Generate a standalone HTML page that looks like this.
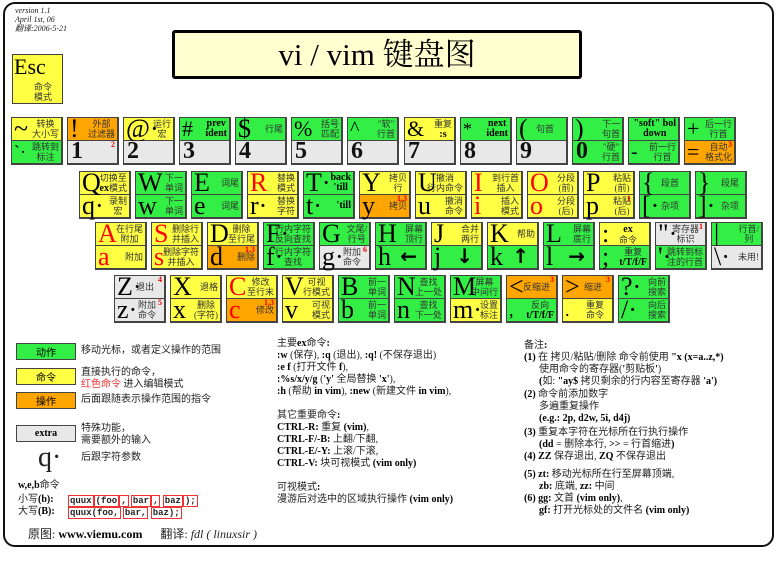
<!DOCTYPE html>
<html><head><meta charset="utf-8"><style>
body{margin:0;width:777px;height:573px;background:#fff;position:relative;overflow:hidden;font-family:"Liberation Serif","Noto Serif CJK SC",serif;}
.frame{position:absolute;left:3px;top:2px;width:767px;height:541px;border:2px solid #111;border-radius:12px;box-sizing:content-box;}
.ttl{position:absolute;left:172px;top:30px;width:404px;height:43px;background:#ffffd0;border:3px solid #000;border-radius:3px;font-size:31px;line-height:43px;text-align:center;}
.k{position:absolute;width:52px;height:48px;border:1.5px solid #444;box-sizing:border-box;background:#444;}
.h{position:absolute;left:0;width:49px;height:22px;overflow:visible;}
.h.a{top:0}.h.b{top:23px}
.g{background:#33ee44}.y{background:#ffff44}.o{background:#ffa500}.e{background:#e8e8e8}
.c{position:absolute;left:2px;top:-4px;font-size:26px;line-height:30px;font-weight:normal;font-style:normal;}
.t{position:absolute;right:2px;top:1px;font-size:9px;line-height:10px;text-align:center;font-style:normal;font-family:"Liberation Serif","Noto Sans CJK SC",sans-serif;color:#333;white-space:nowrap;}
.t1{top:6px}
.bd{font-weight:bold;color:#000;font-family:"Liberation Serif",serif;font-size:10px;}
.r{color:#f00}
.s{position:absolute;right:2px;top:-1px;color:#e00;font-size:8px;font-weight:bold;}
.n{position:absolute;left:3px;top:-3px;font-size:24px;color:#111}
.ar{position:absolute;right:8px;top:-2px;font-size:20px;line-height:24px;font-weight:bold;color:#000;font-family:"DejaVu Sans",sans-serif;}
.tx{position:absolute;font-size:10px;line-height:12px;color:#222;white-space:nowrap;font-family:"Liberation Serif","Noto Sans CJK SC",serif;}
.tx b{color:#000}
.lg{position:absolute;left:16px;width:58px;height:15px;border:1.5px solid #444;font-size:10px;text-align:center;line-height:15px;font-family:"Noto Sans CJK SC",sans-serif;}
.rb{border:1px solid #e33;padding:0 1px;font-family:"Liberation Mono",monospace;font-weight:bold;}
</style></head><body>
<div class="frame"></div>
<div class="tx" style="left:15px;top:6px;font-size:8px;line-height:9px;font-style:italic">version 1.1<br>April 1st, 06<br>翻译:2006-5-21</div>
<div class="ttl">vi / vim 键盘图</div>
<div style="position:absolute;left:12px;top:54px;width:49px;height:48px;background:#ffff44;border:1.5px solid #444">
<span style="position:absolute;left:1px;top:-1px;font-size:22px">Esc</span>
<span class="t" style="top:27px;right:10px">命令<br>模式</span></div>

<!-- Row 1 -->
<div class="k" style="left:11px;top:117px"><div class="h a y"><b class="c">~</b><i class="t">转换<br>大小写</i></div><div class="h b g"><b class="c" style="font-size:18px">`·</b><i class="t">跳转到<br>标注</i></div></div>
<div class="k" style="left:67px;top:117px"><div class="h a o"><b class="c">!</b><i class="t">外部<br>过滤器</i></div><div class="h b e"><b class="n">1</b><span class="s">2</span></div></div>
<div class="k" style="left:123px;top:117px"><div class="h a y"><b class="c">@·</b><i class="t">运行<br>宏</i></div><div class="h b e"><b class="n">2</b></div></div>
<div class="k" style="left:179px;top:117px"><div class="h a g"><b class="c" style="font-size:22px">#</b><i class="t bd">prev<br>ident</i></div><div class="h b e"><b class="n">3</b></div></div>
<div class="k" style="left:235px;top:117px"><div class="h a g"><b class="c">$</b><i class="t t1">行尾</i></div><div class="h b e"><b class="n">4</b></div></div>
<div class="k" style="left:291px;top:117px"><div class="h a g"><b class="c" style="font-size:22px">%</b><i class="t">括号<br>匹配</i></div><div class="h b e"><b class="n">5</b></div></div>
<div class="k" style="left:347px;top:117px"><div class="h a g"><b class="c" style="font-size:20px">^</b><i class="t">"软"<br>行首</i></div><div class="h b e"><b class="n">6</b></div></div>
<div class="k" style="left:404px;top:117px"><div class="h a y"><b class="c" style="font-size:22px">&amp;</b><i class="t">重复<br><b class="bd">:s</b></i></div><div class="h b e"><b class="n">7</b></div></div>
<div class="k" style="left:460px;top:117px"><div class="h a g"><b class="c" style="font-size:18px">*</b><i class="t bd">next<br>ident</i></div><div class="h b e"><b class="n">8</b></div></div>
<div class="k" style="left:516px;top:117px"><div class="h a g"><b class="c">(</b><i class="t t1" style="right:12px">句首</i></div><div class="h b e"><b class="n">9</b></div></div>
<div class="k" style="left:572px;top:117px"><div class="h a g"><b class="c">)</b><i class="t">下一<br>句首</i></div><div class="h b g"><b class="n">0</b><i class="t">"硬"<br>行首</i></div></div>
<div class="k" style="left:628px;top:117px"><div class="h a g"><b class="c" style="top:2px">_</b><i class="t bd">"soft" bol<br>down</i></div><div class="h b g"><b class="c" style="font-size:20px">-</b><i class="t">前一行<br>行首</i></div></div>
<div class="k" style="left:684px;top:117px"><div class="h a g"><b class="c" style="font-size:22px">+</b><i class="t">后一行<br>行首</i></div><div class="h b o"><b class="c" style="font-size:22px">=</b><i class="t">自动<br>格式化</i><span class="s">3</span></div></div>

<!-- Row 2 -->
<div class="k" style="left:79px;top:171px"><div class="h a y"><b class="c">Q</b><i class="t">切换至<br><b class="bd">ex</b>模式</i></div><div class="h b y"><b class="c">q·</b><i class="t">录制<br>宏</i></div></div>
<div class="k" style="left:135px;top:171px"><div class="h a g"><b class="c">W</b><i class="t">下一<br>单词</i></div><div class="h b g"><b class="c">w</b><i class="t">下一<br>单词</i></div></div>
<div class="k" style="left:191px;top:171px"><div class="h a g"><b class="c">E</b><i class="t t1">词尾</i></div><div class="h b g"><b class="c">e</b><i class="t t1">词尾</i></div></div>
<div class="k" style="left:247px;top:171px"><div class="h a y"><b class="c r">R</b><i class="t">替换<br>模式</i></div><div class="h b y"><b class="c">r·</b><i class="t">替换<br>字符</i></div></div>
<div class="k" style="left:303px;top:171px"><div class="h a g"><b class="c">T·</b><i class="t bd">back<br>'till</i></div><div class="h b g"><b class="c">t·</b><i class="t t1 bd">'till</i></div></div>
<div class="k" style="left:359px;top:171px"><div class="h a y"><b class="c">Y</b><i class="t">拷贝<br>行</i></div><div class="h b o"><b class="c">y</b><i class="t t1">拷贝</i><span class="s">1,3</span></div></div>
<div class="k" style="left:415px;top:171px"><div class="h a y"><b class="c">U</b><i class="t">撤消<br>行内命令</i></div><div class="h b y"><b class="c">u</b><i class="t">撤消<br>命令</i></div></div>
<div class="k" style="left:471px;top:171px"><div class="h a y"><b class="c r">I</b><i class="t">到行首<br>插入</i></div><div class="h b y"><b class="c r">i</b><i class="t">插入<br>模式</i></div></div>
<div class="k" style="left:527px;top:171px"><div class="h a y"><b class="c r">O</b><i class="t">分段<br>(前)</i></div><div class="h b y"><b class="c r">o</b><i class="t">分段<br>(后)</i></div></div>
<div class="k" style="left:583px;top:171px"><div class="h a y"><b class="c">P</b><i class="t">粘贴<br>(前)</i></div><div class="h b y"><b class="c">p</b><i class="t">粘贴<br>(后)</i><span class="s">1</span></div></div>
<div class="k" style="left:639px;top:171px"><div class="h a g"><b class="c">{</b><i class="t t1" style="right:10px">段首</i></div><div class="h b g"><b class="c">[·</b><i class="t t1" style="right:10px">杂项</i></div></div>
<div class="k" style="left:695px;top:171px"><div class="h a g"><b class="c">}</b><i class="t t1" style="right:6px">段尾</i></div><div class="h b g"><b class="c">]·</b><i class="t t1" style="right:6px">杂项</i></div></div>

<!-- Row 3 -->
<div class="k" style="left:95px;top:222px"><div class="h a y"><b class="c r">A</b><i class="t">在行尾<br>附加</i></div><div class="h b y"><b class="c r">a</b><i class="t t1">附加</i></div></div>
<div class="k" style="left:151px;top:222px"><div class="h a y"><b class="c r">S</b><i class="t">删除行<br>并插入</i></div><div class="h b y"><b class="c r">s</b><i class="t">删除字符<br>并插入</i></div></div>
<div class="k" style="left:207px;top:222px"><div class="h a y"><b class="c">D</b><i class="t">删除<br>至行尾</i></div><div class="h b o"><b class="c">d</b><i class="t t1">删除</i><span class="s">1,3</span></div></div>
<div class="k" style="left:263px;top:222px"><div class="h a g"><b class="c">F·</b><i class="t">行内字符<br>反向查找</i></div><div class="h b g"><b class="c">f·</b><i class="t">行内字符<br>查找</i></div></div>
<div class="k" style="left:319px;top:222px"><div class="h a g"><b class="c">G</b><i class="t">文尾/<br>行号</i></div><div class="h b e"><b class="c">g·</b><i class="t" style="right:8px">附加<br>命令</i><span class="s">6</span></div></div>
<div class="k" style="left:375px;top:222px"><div class="h a g"><b class="c">H</b><i class="t">屏幕<br>顶行</i></div><div class="h b g"><b class="c">h</b><span class="ar">←</span></div></div>
<div class="k" style="left:431px;top:222px"><div class="h a y"><b class="c">J</b><i class="t">合并<br>两行</i></div><div class="h b g"><b class="c">j</b><span class="ar">↓</span></div></div>
<div class="k" style="left:487px;top:222px"><div class="h a y"><b class="c">K</b><i class="t t1">帮助</i></div><div class="h b g"><b class="c">k</b><span class="ar">↑</span></div></div>
<div class="k" style="left:543px;top:222px"><div class="h a g"><b class="c">L</b><i class="t">屏幕<br>底行</i></div><div class="h b g"><b class="c">l</b><span class="ar">→</span></div></div>
<div class="k" style="left:599px;top:222px"><div class="h a y"><b class="c">:</b><i class="t" style="right:12px"><b class="bd">ex</b><br>命令</i></div><div class="h b g"><b class="c">;</b><i class="t">重复<br><b class="bd">t/T/f/F</b></i></div></div>
<div class="k" style="left:655px;top:222px"><div class="h a e"><b class="c">"·</b><i class="t" style="right:6px">寄存器<br>标识</i><span class="s">1</span></div><div class="h b g"><b class="c">'·</b><i class="t">跳转到标<br>注的行首</i></div></div>
<div class="k" style="left:711px;top:222px"><div class="h a g"><b class="c">|</b><i class="t">行首/<br>列</i></div><div class="h b e"><b class="c">\·</b><i class="t t1">未用!</i></div></div>

<!-- Row 4 -->
<div class="k" style="left:114px;top:275px"><div class="h a e"><b class="c">Z·</b><i class="t t1" style="right:10px">退出</i><span class="s">4</span></div><div class="h b e"><b class="c">z·</b><i class="t" style="right:8px">附加<br>命令</i><span class="s">5</span></div></div>
<div class="k" style="left:170px;top:275px"><div class="h a y"><b class="c">X</b><i class="t t1">退格</i></div><div class="h b y"><b class="c">x</b><i class="t">删除<br>(字符)</i></div></div>
<div class="k" style="left:226px;top:275px"><div class="h a y"><b class="c r">C</b><i class="t">修改<br>至行末</i></div><div class="h b o"><b class="c r">c</b><i class="t t1">修改</i><span class="s">1,3</span></div></div>
<div class="k" style="left:282px;top:275px"><div class="h a y"><b class="c">V</b><i class="t">可视<br>行模式</i></div><div class="h b y"><b class="c">v</b><i class="t">可视<br>模式</i></div></div>
<div class="k" style="left:338px;top:275px"><div class="h a g"><b class="c">B</b><i class="t">前一<br>单词</i></div><div class="h b g"><b class="c">b</b><i class="t">前一<br>单词</i></div></div>
<div class="k" style="left:394px;top:275px"><div class="h a g"><b class="c">N</b><i class="t">查找<br>上一处</i></div><div class="h b g"><b class="c">n</b><i class="t">查找<br>下一处</i></div></div>
<div class="k" style="left:450px;top:275px"><div class="h a g"><b class="c">M</b><i class="t">屏幕<br>中间行</i></div><div class="h b y"><b class="c">m·</b><i class="t">设置<br>标注</i></div></div>
<div class="k" style="left:506px;top:275px"><div class="h a o"><b class="c">&lt;</b><i class="t t1" style="right:6px">反缩进</i><span class="s">3</span></div><div class="h b g"><b class="c" style="font-size:18px">,</b><i class="t">反向<br><b class="bd">t/T/f/F</b></i></div></div>
<div class="k" style="left:562px;top:275px"><div class="h a o"><b class="c">&gt;</b><i class="t t1" style="right:10px">缩进</i><span class="s">3</span></div><div class="h b y"><b class="c" style="font-size:18px">.</b><i class="t" style="right:8px">重复<br>命令</i></div></div>
<div class="k" style="left:618px;top:275px"><div class="h a g"><b class="c">?·</b><i class="t">向前<br>搜索</i></div><div class="h b g"><b class="c">/·</b><i class="t">向后<br>搜索</i></div></div>

<!-- Legend -->
<div class="lg g" style="top:343px">动作</div>
<div class="tx" style="left:81px;top:345px">移动光标，或者定义操作的范围</div>
<div class="lg y" style="top:368px">命令</div>
<div class="tx" style="left:81px;top:367px">直接执行的命令，<br><span style="color:#e33">红色命令</span> 进入编辑模式</div>
<div class="lg o" style="top:392px">操作</div>
<div class="tx" style="left:81px;top:394px">后面跟随表示操作范围的指令</div>
<div class="lg e" style="top:425px;font-weight:bold;font-family:'Liberation Serif',serif">extra</div>
<div class="tx" style="left:81px;top:423px">特殊功能，<br>需要额外的输入</div>
<div class="tx" style="left:38px;top:443px;font-size:28px;line-height:30px">q·</div>
<div class="tx" style="left:81px;top:452px">后跟字符参数</div>
<div class="tx" style="left:18px;top:480px"><b>w,e,b</b>命令</div>
<div class="tx" style="left:18px;top:494px">小写<b>(b):</b></div>
<div class="tx" style="left:18px;top:506px">大写<b>(B):</b></div>
<div class="tx" style="left:68px;top:494px;font-size:9px"><span class="rb">quux</span><span class="rb">(foo</span><span class="rb">,</span> <span class="rb">bar</span><span class="rb">,</span> <span class="rb">baz</span><span class="rb">);</span></div>
<div class="tx" style="left:68px;top:506px;font-size:9px"><span class="rb">quux(foo,</span> <span class="rb">bar,</span> <span class="rb">baz);</span></div>
<div class="tx" style="left:28px;top:527px;font-size:12px;line-height:14px">原图: <b>www.viemu.com</b> &nbsp;&nbsp;&nbsp;&nbsp; 翻译: <i>fdl ( linuxsir )</i></div>

<div class="tx" style="left:277px;top:338px">主要<b>ex</b>命令<b>:</b><br><b>:w</b> (保存), <b>:q</b> (退出), <b>:q!</b> (不保存退出)<br><b>:e f</b> (打开文件 <b>f</b>),<br><b>:%s/x/y/g</b> (<b>'y'</b> 全局替换 <b>'x'</b>),<br><b>:h</b> (帮助 <b>in vim</b>), <b>:new</b> (新建文件 <b>in vim</b>),<br><br>其它重要命令<b>:</b><br><b>CTRL-R:</b> 重复 <b>(vim)</b>,<br><b>CTRL-F/-B:</b> 上翻/下翻,<br><b>CTRL-E/-Y:</b> 上滚/下滚,<br><b>CTRL-V:</b> 块可视模式 <b>(vim only)</b><br><br>可视模式<b>:</b><br>漫游后对选中的区域执行操作 <b>(vim only)</b></div>

<div class="tx" style="left:524px;top:340px">备注<b>:</b></div>
<div class="tx" style="left:524px;top:352px"><b class="r">(1)</b> 在 拷贝/粘贴/删除 命令前使用 <b>"x (x=a..z,*)</b><br>&nbsp;&nbsp;&nbsp;&nbsp;&nbsp; 使用命令的寄存器(<b>'</b>剪贴板<b>'</b>)<br>&nbsp;&nbsp;&nbsp;&nbsp;&nbsp; <b>(</b>如: <b>"ay$</b> 拷贝剩余的行内容至寄存器 <b>'a')</b></div>
<div class="tx" style="left:524px;top:389px"><b class="r">(2)</b> 命令前添加数字<br>&nbsp;&nbsp;&nbsp;&nbsp;&nbsp; 多遍重复操作<br>&nbsp;&nbsp;&nbsp;&nbsp;&nbsp; <b>(e.g.: 2p, d2w, 5i, d4j)</b></div>
<div class="tx" style="left:524px;top:427px"><b class="r">(3)</b> 重复本字符在光标所在行执行操作<br>&nbsp;&nbsp;&nbsp;&nbsp;&nbsp; <b>(dd</b> = 删除本行, <b>&gt;&gt;</b> = 行首缩进<b>)</b></div>
<div class="tx" style="left:524px;top:451px"><b class="r">(4)</b> <b>ZZ</b> 保存退出, <b>ZQ</b> 不保存退出</div>
<div class="tx" style="left:524px;top:469px"><b class="r">(5)</b> <b>zt:</b> 移动光标所在行至屏幕顶端,<br>&nbsp;&nbsp;&nbsp;&nbsp;&nbsp; <b>zb:</b> 底端, <b>zz:</b> 中间</div>
<div class="tx" style="left:524px;top:493px"><b class="r">(6)</b> <b>gg:</b> 文首 <b>(vim only)</b>,<br>&nbsp;&nbsp;&nbsp;&nbsp;&nbsp; <b>gf:</b> 打开光标处的文件名 <b>(vim only)</b></div>
</body></html>
